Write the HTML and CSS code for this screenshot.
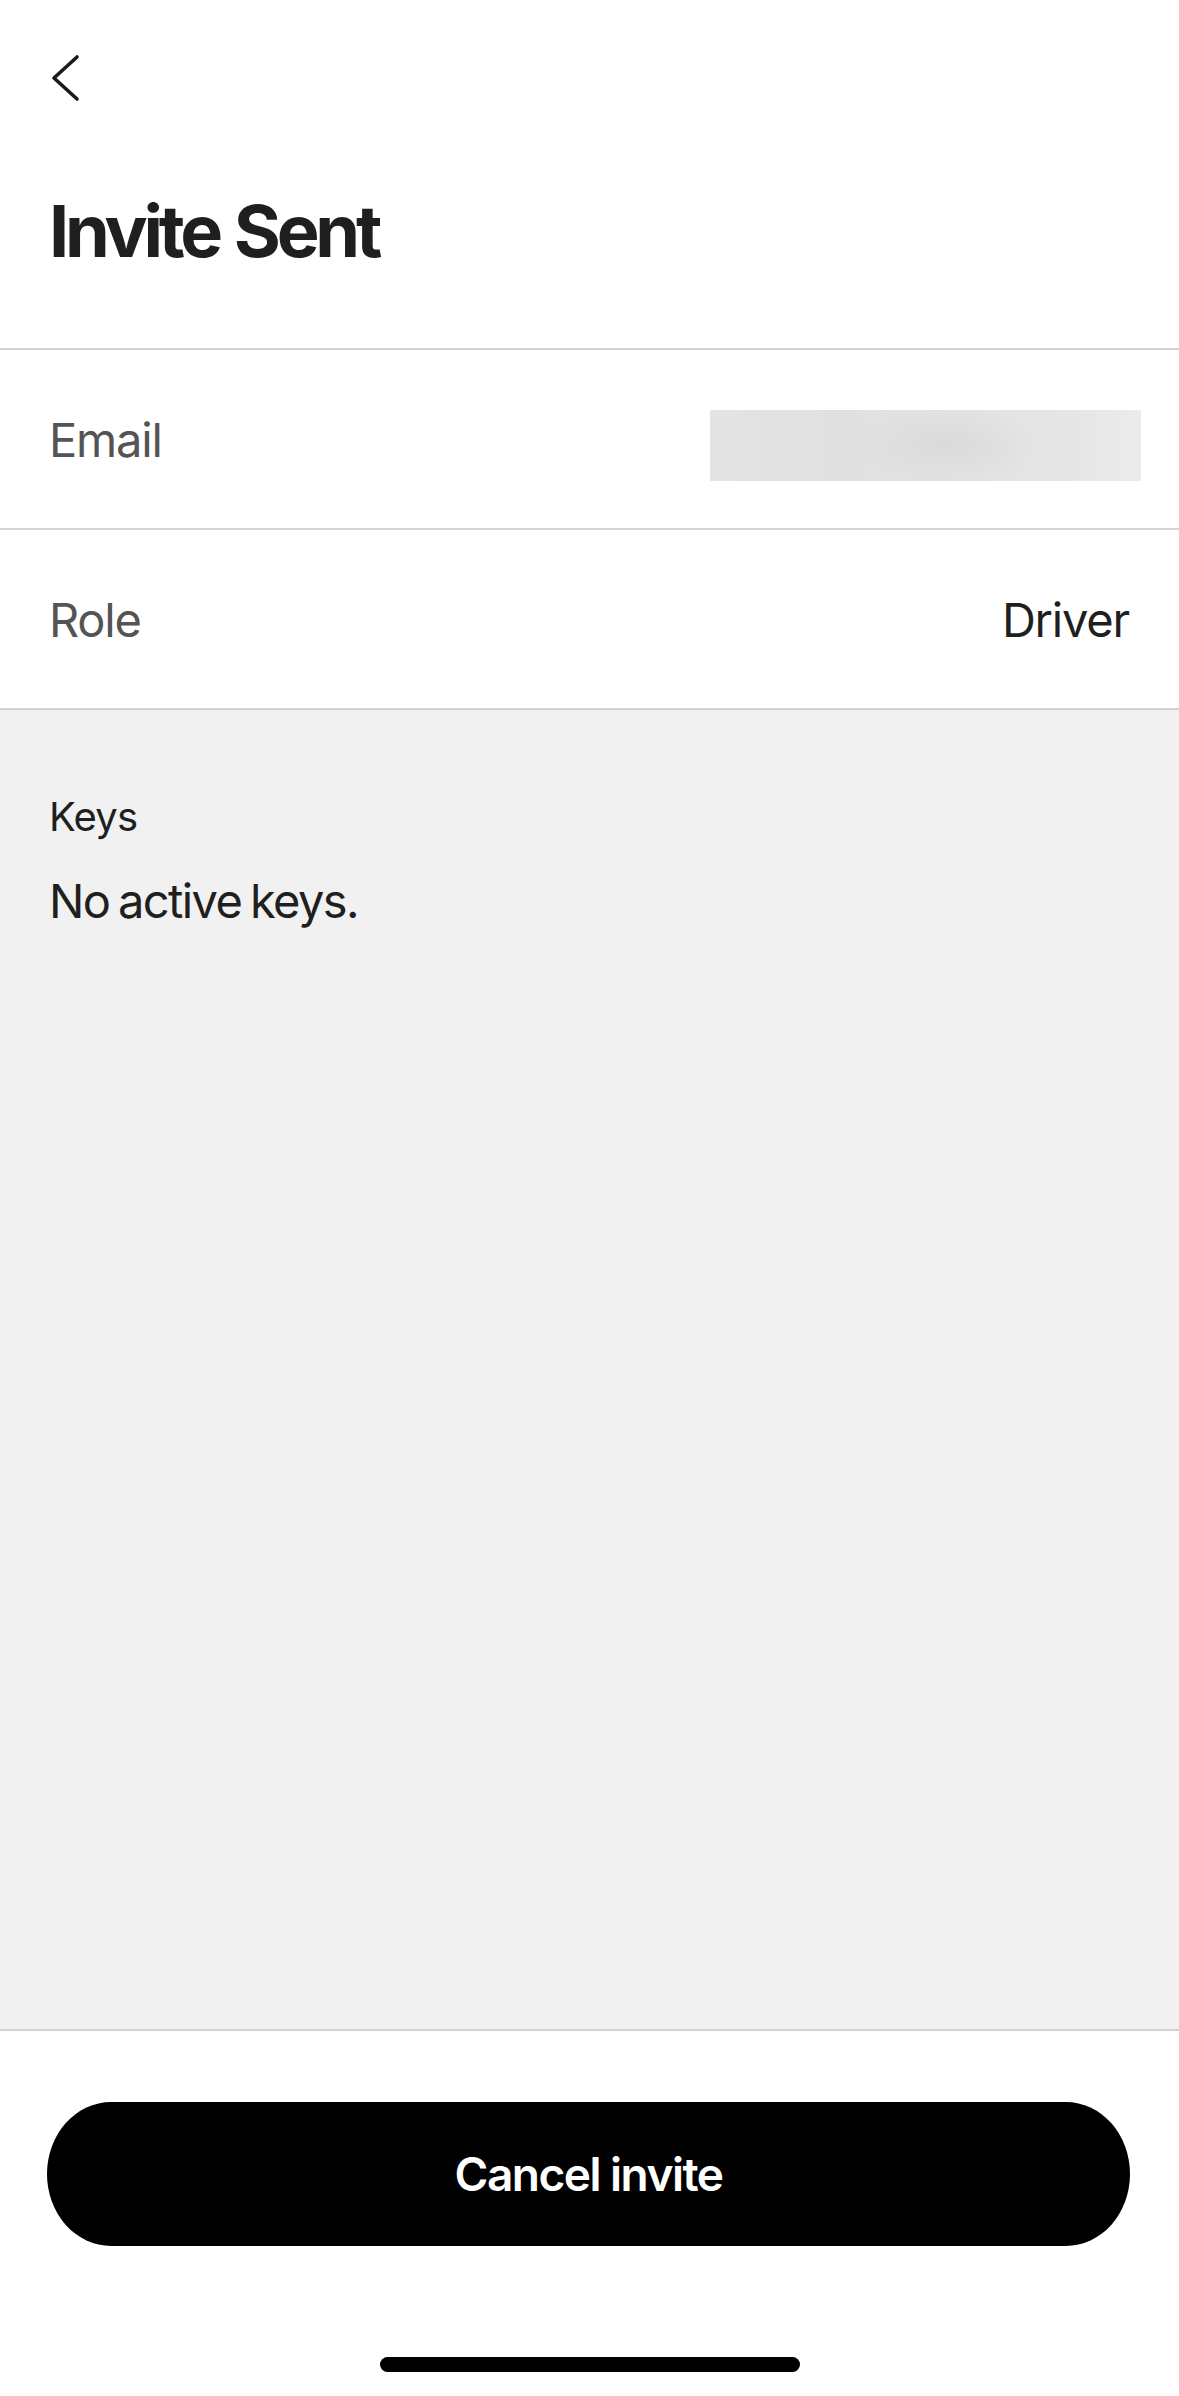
FILE: index.html
```html
<!DOCTYPE html>
<html lang="en">
<head>
<meta charset="utf-8">
<title>Invite Sent</title>
<link rel="stylesheet" href="styles.css">
</head>
<body>
<div class="page">
  <header class="header">
    <button class="back" aria-label="Back">
      <svg width="30" height="48" viewBox="0 0 30 48" fill="none" stroke="#1a1a1a" stroke-width="3.6" stroke-linecap="round" stroke-linejoin="round"><path d="M26 3 L3 24 L26 45"/></svg>
    </button>
    <h1 class="title">Invite Sent</h1>
  </header>
  <div class="row">
    <span class="label">Email</span>
    <span class="redacted"></span>
  </div>
  <div class="row">
    <span class="label">Role</span>
    <span class="value">Driver</span>
  </div>
  <section class="keys">
    <div class="keys-label">Keys</div>
    <div class="keys-empty">No active keys.</div>
  </section>
  <footer class="footer">
    <button class="cancel">Cancel invite</button>
    <div class="home-indicator"></div>
  </footer>
</div>
</body>
</html>
```

FILE: styles.css
```css
* { box-sizing: border-box; }
html, body { margin: 0; padding: 0; }
body {
  font-family: Inter, "Noto Sans", "Liberation Sans", sans-serif;
  color: #1f1f1f;
  background: #fff;
}
.page {
  width: 1179px;
  height: 2396px;
  display: flex;
  flex-direction: column;
  overflow: hidden;
}
.header {
  height: 350px;
  padding: 54px 49px 0;
  border-bottom: 2px solid #d2d2d2;
  display: flex;
  flex-direction: column;
  align-items: flex-start;
  flex: none;
}
.back {
  border: 0;
  background: none;
  padding: 0;
  margin-left: 2px;
  width: 30px;
  height: 48px;
  display: block;
}
.back svg { display: block; }
.title {
  margin: 93px 0 0;
  font-size: 72px;
  line-height: 1;
  font-weight: 700;
  letter-spacing: -4.2px;
  word-spacing: 2px;
  color: #1f1f1f;
}
.row {
  height: 180px;
  flex: none;
  border-bottom: 2px solid #d2d2d2;
  display: flex;
  align-items: center;
  justify-content: space-between;
  padding: 0 50px 0 49px;
  font-size: 47px;
  letter-spacing: -1.2px;
}
.label { color: #545454; }
.value { color: #1f1f1f; }
.redacted {
  width: 431px;
  height: 71px;
  margin-right: -12px;
  margin-top: 12px;
  background:
    radial-gradient(ellipse 90px 40px at 55% 50%, #dadada, transparent),
    linear-gradient(90deg, #e4e4e4, #e0e0e0 30%, #e3e3e3 60%, #e6e6e6 85%, #ececec);
}
.keys {
  flex: 1;
  background: #f1f1f1;
  padding: 87px 49px 0;
}
.keys-label {
  font-size: 40px;
  line-height: 1;
  letter-spacing: -0.8px;
  color: #1f1f1f;
}
.keys-empty {
  margin-top: 40px;
  font-size: 47px;
  line-height: 1;
  letter-spacing: -1.6px;
  word-spacing: -3px;
  color: #1f1f1f;
}
.footer {
  height: 367px;
  flex: none;
  border-top: 2px solid #d2d2d2;
  background: #fff;
  display: flex;
  flex-direction: column;
  align-items: center;
  padding-top: 71px;
}
.cancel {
  width: 1083px;
  height: 144px;
  margin-left: -2px;
  background: #000;
  color: #fff;
  border: 0;
  border-radius: 64px / 72px;
  font-family: Inter, "Noto Sans", "Liberation Sans", sans-serif;
  font-size: 46px;
  font-weight: 600;
  letter-spacing: -1.5px;
  padding: 0;
}
.home-indicator {
  margin-top: 111px;
  width: 420px;
  height: 15px;
  border-radius: 8px;
  background: #000;
}
```
